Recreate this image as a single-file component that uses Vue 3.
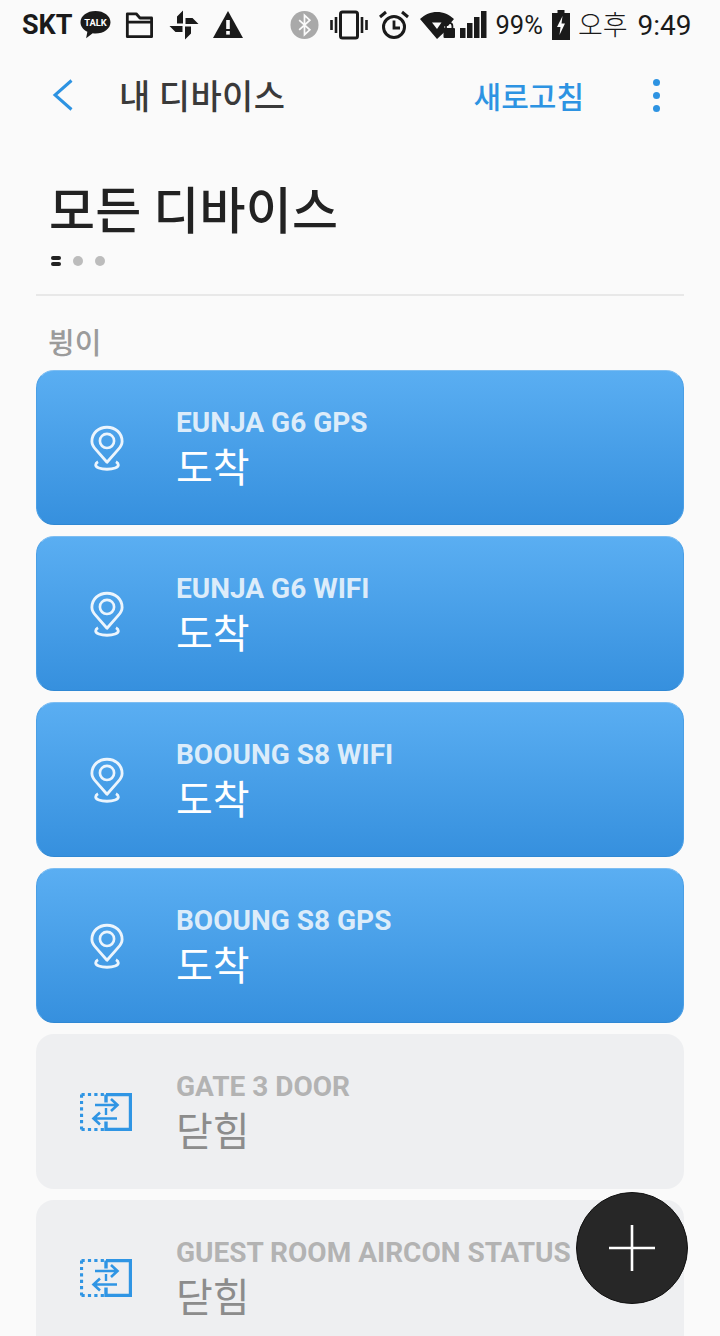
<script setup>
const groups = [
  { name: 'EUNJA G6 GPS', state: '도착', on: true },
  { name: 'EUNJA G6 WIFI', state: '도착', on: true },
  { name: 'BOOUNG S8 WIFI', state: '도착', on: true },
  { name: 'BOOUNG S8 GPS', state: '도착', on: true },
  { name: 'GATE 3 DOOR', state: '닫힘', on: false },
  { name: 'GUEST ROOM AIRCON STATUS', state: '닫힘', on: false }
]
</script>

<template>
  <div class="page">
    <div class="status">
      <span class="carrier">SKT</span>
      <svg class="ic" style="margin-left:6px" width="33" height="30" viewBox="0 0 34 32">
        <path d="M17 1C8 1 1 6.300 1 13c0 4.300 2.900 8 7.300 10.200L7 30l7-5.100c1 .1 2 .2 3 .2 9 0 16-5.400 16-12.100S26 1 17 1z" fill="#1a1a1a"/>
        <text x="17" y="17.500" class="talk">TALK</text>
      </svg>
      <svg class="ic" style="margin-left:13px" width="28" height="28" viewBox="0 0 30 30">
        <path d="M2.500 27.500V3h9.500l4 4.500h12.500v20z M2.500 12h26" fill="none" stroke="#1a1a1a" stroke-width="3" stroke-linejoin="round"/>
      </svg>
      <svg class="ic" style="margin-left:16px" width="30" height="30" viewBox="0 0 30 30">
        <path d="M14 13.500V0.500l-6 6v7z M16.500 14H29.500l-6-6h-7z M16 16.500V29.500l6-6v-7z M13.500 16H0.500l6 6h7z" fill="#1a1a1a"/>
      </svg>
      <svg class="ic" style="margin-left:14px" width="30" height="28" viewBox="0 0 30 28">
        <path d="M15 0L0 27h30z" fill="#1a1a1a"/>
        <rect x="13.200" y="9" width="3.600" height="9" fill="#fafafa"/>
        <rect x="13.200" y="20" width="3.600" height="3.600" fill="#fafafa"/>
      </svg>
      <svg class="ic" style="margin-left:47px" width="29" height="30" viewBox="0 0 30 30">
        <circle cx="15" cy="15" r="14.500" fill="#a9a9a9"/>
        <path d="M9.500 10l11 10-5.500 5V5l5.500 5-11 10" fill="none" stroke="#fafafa" stroke-width="1.800"/>
      </svg>
      <svg class="ic" style="margin-left:11px" width="38" height="30" viewBox="0 0 38 30">
        <rect x="10.500" y="2" width="17" height="26" rx="2" fill="none" stroke="#1a1a1a" stroke-width="3"/>
        <path d="M1.500 10v10M6 7v16M32 7v16M36.500 10v10" stroke="#1a1a1a" stroke-width="2.600"/>
      </svg>
      <svg class="ic" style="margin-left:11px" width="30" height="30" viewBox="0 0 30 30">
        <circle cx="15" cy="17" r="10.500" fill="none" stroke="#1a1a1a" stroke-width="3"/>
        <path d="M15 10.500V18h6" fill="none" stroke="#1a1a1a" stroke-width="2.800"/>
        <path d="M1 7l6-5M29 7l-6-5" stroke="#1a1a1a" stroke-width="3"/>
      </svg>
      <svg class="ic" style="margin-left:11px" width="36" height="28" viewBox="0 0 36 28">
        <path d="M0 8C5 3.500 10.500 1 17 1s12 2.500 17 7l-6 7h-3.500v6L17 28z" fill="#1a1a1a"/>
        <path d="M12 11.500h9.500L17 18z" fill="#fafafa"/>
        <rect x="23.500" y="17" width="11.500" height="10" rx="1" fill="#1a1a1a"/>
        <path d="M26 17v-2a3.200 3.200 0 016.400 0v2" fill="none" stroke="#1a1a1a" stroke-width="1.800"/>
      </svg>
      <svg class="ic" style="margin-left:3px" width="28" height="30" viewBox="0 0 28 30">
        <path d="M1 18h5.500v10H1zM8 13h5.500v15H8zM15 7h5.500v21H15zM22 1h5.500v27H22z" fill="#1a1a1a"/>
      </svg>
      <span class="pct">99%</span>
      <svg class="ic" style="margin-left:9px" width="18" height="30" viewBox="0 0 18 30">
        <path d="M5.500 0h7v3H18v27H0V3h5.500z" fill="#1a1a1a"/>
        <path d="M10.500 6L5 17h3.500l-1 8L13 13.500H9.500z" fill="#fafafa"/>
      </svg>
      <span class="clock">오후 <span class="time">9:49</span></span>
    </div>

    <div class="topbar">
      <svg class="back" width="22" height="32" viewBox="0 0 22 32">
        <path d="M19.500 1.500L3 16l16.500 14.500" fill="none" stroke="#2d93e2" stroke-width="3"/>
      </svg>
      <span class="top-title">내 디바이스</span>
      <span class="refresh">새로고침</span>
      <div class="more"><i></i><i></i><i></i></div>
    </div>

    <h1 class="title">모든 디바이스</h1>
    <div class="dots">
      <span class="home"><i></i><i></i></span>
      <span class="dot"></span>
      <span class="dot"></span>
    </div>
    <div class="rule"></div>
    <div class="group-name">뷩이</div>

    <div class="list">
      <div v-for="g in groups" :key="g.name" class="card" :class="{ on: g.on }">
        <div class="icon-box">
          <svg v-if="g.on" width="34" height="47" viewBox="0 0 36 48">
            <path d="M18 38.500L6.500 25.500C3.800 22.500 2 19.500 2 16.500 2 7.500 9.200 1.500 18 1.500s16 6 16 15c0 3-1.800 6-4.500 9z" fill="none" stroke="#ecf5fd" stroke-width="3" stroke-linejoin="round"/>
            <circle cx="18" cy="16" r="7.500" fill="none" stroke="#ecf5fd" stroke-width="2.800"/>
            <path d="M8.500 38c-1.500 .8-2.500 2-2.500 3.500 0 2.500 5 4.500 12 4.500s12-2 12-4.500c0-1.500-1-2.700-2.500-3.500" fill="none" stroke="#ecf5fd" stroke-width="3"/>
          </svg>
          <svg v-else width="52" height="38" viewBox="0 0 52 38">
            <path d="M1.500 1.500h23M1.500 36.500h23M1.500 1.500v35" fill="none" stroke="#2f95e4" stroke-width="3.200" stroke-dasharray="3.200 3.200"/>
            <path d="M26 1.500h24.500v35H26v-8M26 1.500v8" fill="none" stroke="#2f95e4" stroke-width="3.400"/>
            <path d="M15 12h22M31 6l6.500 6-6.500 6M37 25.500H14M20 19.500l-6.500 6 6.500 6" fill="none" stroke="#2f95e4" stroke-width="2.600"/>
            <path d="M26 15v7" stroke="#2f95e4" stroke-width="2.400"/>
          </svg>
        </div>
        <div class="info">
          <div class="name">{{ g.name }}</div>
          <div class="state">{{ g.state }}</div>
        </div>
      </div>
    </div>

    <div class="fab">
      <svg width="46" height="46" viewBox="0 0 46 46">
        <path d="M23 0v46M0 23h46" stroke="#fff" stroke-width="2.600"/>
      </svg>
    </div>
  </div>
</template>

<style scoped>
.page {
  position: relative;
  width: 720px;
  height: 1336px;
  overflow: hidden;
  background: #fafafa;
  font-family: "Noto Sans CJK KR", "Noto Sans", sans-serif;
}
.status {
  display: flex;
  align-items: center;
  height: 50px;
  padding-left: 22px;
  color: #1a1a1a;
}
.ic {
  flex: none;
}
.carrier {
  font: 700 27px "Roboto", sans-serif;
}
.talk {
  font: 700 10px "Roboto", sans-serif;
  fill: #fff;
  text-anchor: middle;
}
.pct {
  margin-left: 9px;
  font: 400 25.500px "Roboto", sans-serif;
}
.clock {
  margin-left: 8px;
  font-size: 27px;
  font-weight: 300;
  line-height: 1;
  white-space: nowrap;
}
.time {
  margin-left: 4px;
  font: 400 28px "Roboto", sans-serif;
}
.topbar {
  display: flex;
  align-items: center;
  height: 90px;
  padding-left: 52px;
}
.back {
  flex: none;
}
.top-title {
  margin-left: 45px;
  font-size: 34px;
  font-weight: 500;
  letter-spacing: .4px;
  color: #3a3a3a;
  line-height: 1;
}
.refresh {
  margin-left: auto;
  font-size: 30px;
  font-weight: 500;
  color: #2d93e2;
  line-height: 1;
}
.more {
  display: flex;
  flex-direction: column;
  gap: 6px;
  margin: 0 60px 0 69px;
}
.more i {
  display: block;
  width: 7px;
  height: 7px;
  border-radius: 50%;
  background: #2d93e2;
}
.title {
  margin: 37px 0 0 49px;
  font-size: 50px;
  font-weight: 500;
  letter-spacing: .3px;
  line-height: 60px;
  color: #222;
}
.dots {
  display: flex;
  align-items: center;
  gap: 12px;
  height: 12px;
  margin: 18px 0 0 51px;
}
.home {
  display: flex;
  flex-direction: column;
  gap: 2px;
}
.home i {
  display: block;
  width: 10px;
  height: 4px;
  border-radius: 2px;
  background: #222;
}
.dot {
  width: 10px;
  height: 10px;
  border-radius: 50%;
  background: #bcbcbc;
}
.rule {
  height: 2px;
  margin: 27px 36px 0;
  background: #e8e8e8;
}
.group-name {
  margin: 27px 0 0 48px;
  font-size: 29px;
  font-weight: 500;
  line-height: 36px;
  color: #9b9b9b;
}
.list {
  display: flex;
  flex-direction: column;
  gap: 11px;
  margin: 11px 36px 0;
}
.card {
  flex: none;
  display: flex;
  align-items: center;
  box-sizing: border-box;
  height: 155px;
  border-radius: 18px;
  background: #eeeff1;
}
.card.on {
  border: 1px solid;
  border-color: #7cbdf2 #4a9fe6 #2f88d4;
  background: linear-gradient(#5aaef2, #3690de);
}
.icon-box {
  flex: none;
  display: flex;
  justify-content: center;
  width: 140px;
}
.on .icon-box {
  width: 139px;
  margin-left: -1px;
  padding-left: 1px;
  padding-top: 2px;
}
.info {
  padding-top: 2px;
}
.name {
  font: 700 28px/30px "Roboto", sans-serif;
  color: #b3b3b3;
  white-space: nowrap;
}
.on .name {
  color: #dcecfa;
}
.state {
  margin-top: 2px;
  font-size: 40px;
  line-height: 50px;
  color: #8c8c8c;
}
.on .state {
  color: #fff;
}
.fab {
  position: absolute;
  left: 576px;
  top: 1192px;
  display: flex;
  align-items: center;
  justify-content: center;
  box-sizing: border-box;
  width: 112px;
  height: 112px;
  border: 1px solid #111;
  border-radius: 50%;
  background: #272727;
}
</style>
